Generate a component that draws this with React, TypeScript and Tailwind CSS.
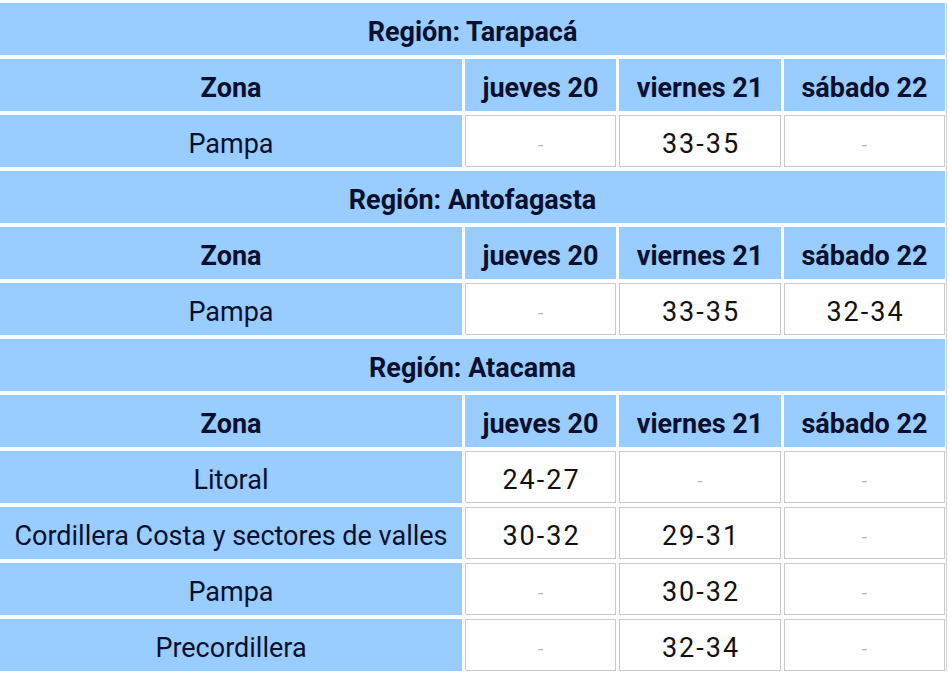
import React from "react";

type Row = { zona: string; vals: (string | null)[] };
type Region = { name: string; rows: Row[] };

const regions: Region[] = [
  { name: "Región: Tarapacá", rows: [{ zona: "Pampa", vals: [null, "33-35", null] }] },
  { name: "Región: Antofagasta", rows: [{ zona: "Pampa", vals: [null, "33-35", "32-34"] }] },
  {
    name: "Región: Atacama",
    rows: [
      { zona: "Litoral", vals: ["24-27", null, null] },
      { zona: "Cordillera Costa y sectores de valles", vals: ["30-32", "29-31", null] },
      { zona: "Pampa", vals: [null, "30-32", null] },
      { zona: "Precordillera", vals: [null, "32-34", null] },
    ],
  },
];

const days = ["jueves 20", "viernes 21", "sábado 22"];

const blue = "h-[52px] flex items-center justify-center pt-[6px] bg-[#99ccff] text-[#0d0f2e]";
const white = "h-[52px] flex items-center justify-center pt-[6px] bg-white border border-[#c9c9c9] text-[#111111]";

export default function App() {
  return (
    <div
      className="w-[949px] h-[675px] bg-white overflow-hidden pt-[3px]"
      style={{ fontFamily: "Roboto, 'Noto Sans', sans-serif" }}
    >
      <div className="w-[947px] border-r border-[#d0d0d0] pr-[1px]">
        <div className="grid grid-cols-[462px_151px_162px_161px] gap-x-[3px] gap-y-[4px] text-[27px] leading-none">
          {regions.map((r) => (
            <React.Fragment key={r.name}>
              <div className={`${blue} col-span-4 font-bold`}>{r.name}</div>
              <div className={`${blue} font-bold`}>Zona</div>
              {days.map((d) => (
                <div key={d} className={`${blue} font-bold`}>
                  {d}
                </div>
              ))}
              {r.rows.map((row) => (
                <React.Fragment key={row.zona}>
                  <div className={blue}>{row.zona}</div>
                  {row.vals.map((v, i) => (
                    <div key={i} className={white}>
                      {v ? (
                        <span className="tracking-[2px] pl-[2px]">{v}</span>
                      ) : (
                        <span className="text-[#b8b8b8] text-[19px]">-</span>
                      )}
                    </div>
                  ))}
                </React.Fragment>
              ))}
            </React.Fragment>
          ))}
        </div>
      </div>
    </div>
  );
}
